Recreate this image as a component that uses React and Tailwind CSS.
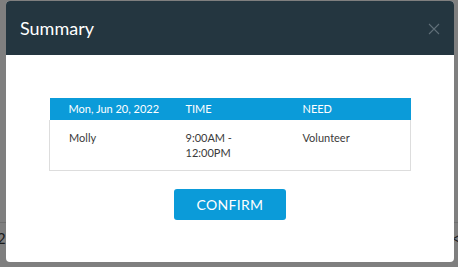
import React from "react";

const rows = [{ name: "Molly", time: ["9:00AM -", "12:00PM"], need: "Volunteer" }];

const App = () => {
  return (
    <div
      className="relative w-[458px] h-[267px] overflow-hidden bg-[#7f7f7f]"
      style={{ fontFamily: "Lato, 'Open Sans', sans-serif" }}
    >
      {/* page behind the overlay */}
      <div className="pt-[222px]">
        <div className="h-px bg-[#6f6f6f]" />
        <div className="flex justify-between items-center h-[30px] text-[15px] text-[#1a1a1a]">
          <span className="-ml-[3px]">2</span>
          <span className="-mr-[2px] text-[#222]">&lt;</span>
        </div>
      </div>

      {/* modal */}
      <div className="absolute left-[6px] top-[1px] w-[448px] h-[261px] rounded-[4px] overflow-hidden bg-white flex flex-col">
        <div className="h-[54px] bg-[#243640] flex items-center justify-between pl-[14px] pr-[14px] shrink-0">
          <h2 className="text-[18px] text-white leading-none">Summary</h2>
          <svg width="12" height="12" viewBox="0 0 12 12" className="mt-[1px]">
            <path d="M1 1 L11 11 M11 1 L1 11" stroke="#5f6e77" strokeWidth="1.1" />
          </svg>
        </div>

        <div className="px-[43px] pt-[43px]">
          <table className="w-[362px] border-collapse text-[11px]">
            <thead>
              <tr className="bg-[#0b9bd9] text-white h-[22px]">
                <th className="text-left font-normal pl-[19px] w-[136px]">Mon, Jun 20, 2022</th>
                <th className="text-left font-normal w-[117px]">TIME</th>
                <th className="text-left font-normal">NEED</th>
              </tr>
            </thead>
            <tbody className="text-[#3a3a3a]">
              {rows.map((r) => (
                <tr key={r.name} className="border border-[#dddddd] border-t-0 align-top">
                  <td className="pl-[19px] pt-[10px]">{r.name}</td>
                  <td className="pt-[10px] pb-[10px] leading-[15px]">
                    {r.time.map((t) => (
                      <div key={t}>{t}</div>
                    ))}
                  </td>
                  <td className="pt-[10px]">{r.need}</td>
                </tr>
              ))}
            </tbody>
          </table>
        </div>

        <div className="flex justify-center pt-[18px]">
          <button className="w-[112px] h-[31px] rounded-[3px] bg-[#0b9bd9] text-white text-[14px] tracking-[0.3px]">
            CONFIRM
          </button>
        </div>
      </div>
    </div>
  );
};

export default App;
